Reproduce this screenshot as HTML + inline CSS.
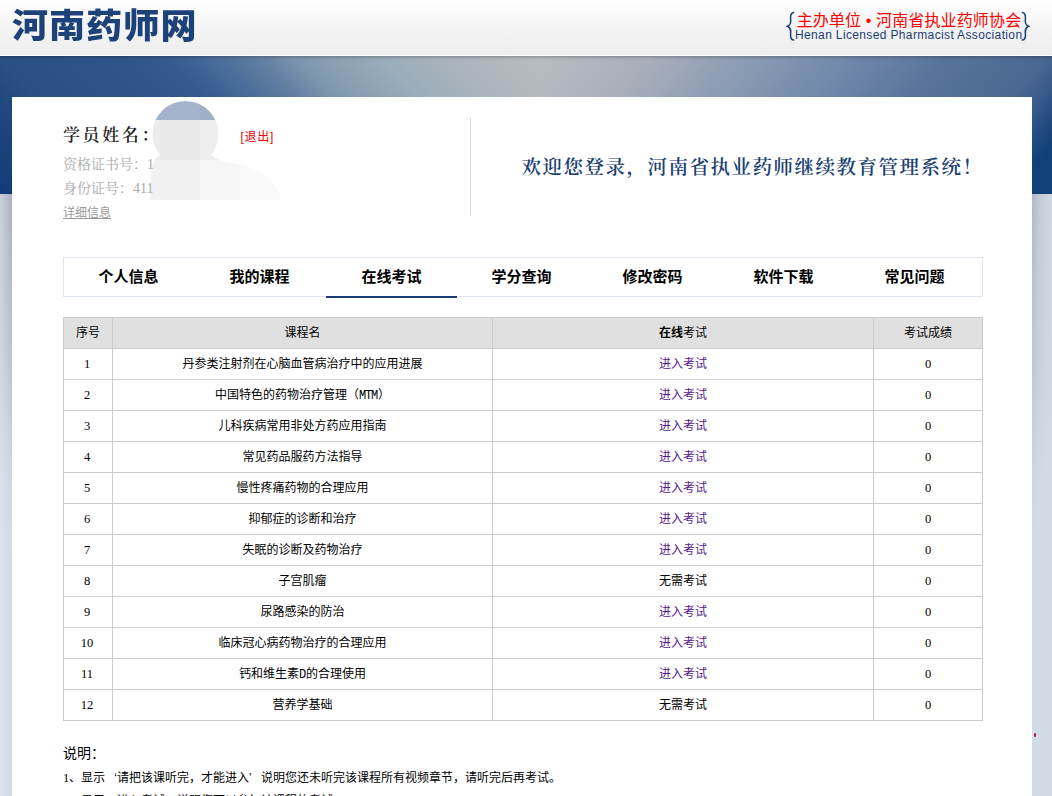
<!DOCTYPE html>
<html lang="zh-CN">
<head>
<meta charset="utf-8">
<title>河南药师网</title>
<style>
*{box-sizing:border-box;margin:0;padding:0}
html,body{width:1052px;height:796px;overflow:hidden}
body{position:relative;font-family:"Liberation Sans","Noto Sans CJK SC",sans-serif;font-size:12px;color:#000;
 background:linear-gradient(to bottom,#b9c0cb 194px,#cfd8e3 420px,#d8e3ee 796px)}
a{text-decoration:none}
#hdr{position:absolute;left:0;top:0;width:1052px;height:56px;background:linear-gradient(to bottom,#ffffff 0,#f4f4f4 50%,#eeeeee 100%);border-bottom:1px solid #fff}
#logo{position:absolute;left:12.2px;top:3px;transform:scaleX(1.062);transform-origin:0 0;font-family:"Liberation Sans","Noto Sans CJK SC",sans-serif;font-weight:900;font-size:34px;line-height:46px;letter-spacing:0.95px;color:#1d4179;white-space:nowrap}
#org{position:absolute;left:780px;top:0;width:272px;height:55px}
#org .cn{position:absolute;left:16.7px;top:10.5px;font-size:16px;line-height:20px;color:#f00;white-space:nowrap;letter-spacing:0.13px}
#org .en{position:absolute;left:15px;top:28.3px;font-size:12px;line-height:15px;color:#1d3d73;white-space:nowrap;letter-spacing:0.36px}
#band{position:absolute;left:0;top:56px;width:1052px;height:138px;background:#123f78;overflow:hidden}
#band i{position:absolute;top:0;height:138px;display:block}
#band .l{left:0;width:540px;background:linear-gradient(45deg,#123a75 0,#21497f 14%,#2b5083 20%,#2d5285 27%,#30558a 38%,#375b8d 45%,#45689a 50%,#5f7da0 57.5%,#7d95ae 63.6%,#8ea2b4 70%,#9aacba 76.1%,#aab5bd 86.7%,#b2b9bf 94%,#b7bdc1 100%)}
#band .r{left:540px;width:512px;background:linear-gradient(310deg,#123f78 0,#123f78 6.5%,#214a7f 10%,#345688 13.5%,#4a6791 19%,#58749c 35%,#7289aa 51%,#8c9cb4 67%,#a9b0bb 83%,#b2b8be 94%,#b7bdc1 100%)}
#band .s{left:0;width:1052px;height:4px;background:linear-gradient(to bottom,rgba(0,0,0,.22) 0,rgba(0,0,0,.1) 40%,rgba(0,0,0,0) 100%)}
#ls,#rs{position:absolute;top:194px;height:602px}
#ls{left:0;width:12px;background:linear-gradient(to bottom,rgba(222,232,244,0) 0,rgba(222,232,244,.3) 26%,rgba(222,232,244,.66) 46%,rgba(222,232,244,.78) 60%),linear-gradient(to right,#cbd1db,#a9b0bc)}
#rs{left:1032px;width:20px;background:linear-gradient(to bottom,rgba(210,220,231,0) 0,rgba(210,220,231,.35) 26%,rgba(210,220,231,.85) 48%,#d2dce7 62%),linear-gradient(to right,#b0b8c4,#c4ccd6 40%,#d0d8e1)}
#dot{position:absolute;left:1034px;top:733px;width:2px;height:4px;border-radius:1px;background:#a8283a}
#panel{position:absolute;left:12px;top:97px;width:1020px;height:700px;background:#fff}
.abs{position:absolute;white-space:nowrap}
.serif{font-family:"Liberation Serif","Noto Serif CJK SC",serif}
#nav{position:absolute;left:63px;top:257px;width:920px;height:40px;border:1px solid #dce5f0;background:#fff}
#nav a{position:absolute;top:0;width:131px;height:38px;line-height:37px;text-align:center;font-weight:bold;font-size:15px;color:#000}
#nav a.on{border-bottom:2px solid #193d72;height:40px;box-shadow:-1px 0 0 #fff,1px 0 0 #fff}
table{position:absolute;left:63px;top:317px;width:919px;border-collapse:collapse;table-layout:fixed}
td,th{border:1px solid #ccc;height:31px;text-align:center;font-size:12px;font-weight:normal;padding:0;vertical-align:middle}
th{background:#e0e0e0;padding-bottom:3px}
td.c{padding-bottom:3px}
td a{color:#551a8b}
.m{font-family:"Liberation Mono",monospace;font-size:12px;letter-spacing:-1.2px;margin-right:1.2px}
td:first-child{padding-right:2px}
td:first-child,td:last-child,.n1{font-family:"Liberation Serif","Noto Sans CJK SC",serif;font-size:12.5px}
.ql,.qr,.n1{display:inline-block;width:12px}
.ql{text-align:right}
.qr{text-align:left}
.n1{width:6px;text-align:center}
</style>
</head>
<body>
<div id="hdr">
 <div id="logo">河南药师网</div>
 <div id="org">
  <svg width="272" height="55" viewBox="0 0 272 55" style="position:absolute;left:0;top:0">
   <g fill="none" stroke="#1d3d73" stroke-width="1.5" stroke-linecap="round">
    <path d="M13.6 12.4 C10.8 13 10.3 15.2 10.6 18.5 C10.9 22 11 24.8 7.4 26.2 C11 27.6 10.9 30.5 10.6 34 C10.3 37.3 10.8 39.5 13.6 40.1"/>
    <path d="M242.4 12.4 C245.2 13 245.7 15.2 245.4 18.5 C245.1 22 245 24.8 248.6 26.2 C245 27.6 245.1 30.5 245.4 34 C245.7 37.3 245.2 39.5 242.4 40.1"/>
   </g>
  </svg>
  <div class="cn">主办单位 • 河南省执业药师协会</div>
  <div class="en">Henan Licensed Pharmacist Association</div>
 </div>
</div>
<div id="band"><i class="l"></i><i class="r"></i><i class="s"></i></div>
<div id="ls"></div><div id="rs"></div><div id="dot"></div>
<div id="panel"></div>

<div class="abs serif" style="left:63px;top:123px;font-size:17px;font-weight:600;line-height:26px;letter-spacing:2.6px;color:#222">学员姓名：</div>
<svg class="abs" style="left:140px;top:97px" width="150" height="108" viewBox="140 97 150 108">
 <defs>
  <clipPath id="sil"><circle cx="185.5" cy="134" r="33"/><path d="M150 200 L151 176 C151 166 153 160 160 155 L212 155 C216 160 222 161.5 232 163 C256 167 276 178 281 200 Z"/></clipPath>
  <filter id="bl" x="-5%" y="-5%" width="110%" height="110%"><feGaussianBlur stdDeviation="0.7"/></filter>
 </defs>
 <g clip-path="url(#sil)" filter="url(#bl)">
  <rect x="140" y="97" width="60" height="108" fill="#f1f1f1"/>
  <rect x="200" y="97" width="40" height="108" fill="#f6f6f6"/>
  <rect x="240" y="97" width="50" height="108" fill="#fafafa"/>
  <rect x="140" y="120" width="20" height="40" fill="#ececec"/>
  <rect x="160" y="120" width="40" height="40" fill="#e9e9e9"/>
  <rect x="200" y="120" width="25" height="40" fill="#eeeeee"/>
  <rect x="140" y="97" width="60" height="23" fill="#a4b3c9"/>
  <rect x="200" y="97" width="25" height="23" fill="#a0b0c7"/>
 </g>
</svg>
<a class="abs" style="left:240.5px;top:129.5px;font-size:12px;line-height:14px;letter-spacing:0.7px;color:#e00" href="#">[退出]</a>
<div class="abs serif" style="left:63px;top:155px;font-size:14px;line-height:20px;color:#aaa">资格证书号：1</div>
<div class="abs serif" style="left:63px;top:179px;font-size:14px;line-height:20px;color:#aaa">身份证号：411</div>
<a class="abs" style="left:63px;top:205px;font-size:12px;line-height:16px;color:#999;text-decoration:underline" href="#">详细信息</a>
<div class="abs" style="left:470px;top:117px;width:1px;height:99px;background:#ddd"></div>
<div class="abs serif" style="left:521.5px;top:154px;font-size:19.5px;font-weight:600;line-height:28px;letter-spacing:1.5px;color:#1c3f73">欢迎您登录，河南省执业药师继续教育管理系统！</div>

<div id="nav">
 <a style="left:-1px" href="#">个人信息</a>
 <a style="left:130px" href="#">我的课程</a>
 <a class="on" style="left:262px" href="#">在线考试</a>
 <a style="left:392px" href="#">学分查询</a>
 <a style="left:523px" href="#">修改密码</a>
 <a style="left:654px" href="#">软件下载</a>
 <a style="left:785px" href="#">常见问题</a>
</div>

<table>
 <colgroup><col style="width:49px"><col style="width:380px"><col style="width:381px"><col style="width:109px"></colgroup>
 <tr><th>序号</th><th>课程名</th><th><b>在线</b>考试</th><th>考试成绩</th></tr>
 <tr><td>1</td><td class="c">丹参类注射剂在心脑血管病治疗中的应用进展</td><td class="c"><a href="#">进入考试</a></td><td>0</td></tr>
 <tr><td>2</td><td class="c">中国特色的药物治疗管理（<span class="m">MTM</span>）</td><td class="c"><a href="#">进入考试</a></td><td>0</td></tr>
 <tr><td>3</td><td class="c">儿科疾病常用非处方药应用指南</td><td class="c"><a href="#">进入考试</a></td><td>0</td></tr>
 <tr><td>4</td><td class="c">常见药品服药方法指导</td><td class="c"><a href="#">进入考试</a></td><td>0</td></tr>
 <tr><td>5</td><td class="c">慢性疼痛药物的合理应用</td><td class="c"><a href="#">进入考试</a></td><td>0</td></tr>
 <tr><td>6</td><td class="c">抑郁症的诊断和治疗</td><td class="c"><a href="#">进入考试</a></td><td>0</td></tr>
 <tr><td>7</td><td class="c">失眠的诊断及药物治疗</td><td class="c"><a href="#">进入考试</a></td><td>0</td></tr>
 <tr><td>8</td><td class="c">子宫肌瘤</td><td class="c">无需考试</td><td>0</td></tr>
 <tr><td>9</td><td class="c">尿路感染的防治</td><td class="c"><a href="#">进入考试</a></td><td>0</td></tr>
 <tr><td>10</td><td class="c">临床冠心病药物治疗的合理应用</td><td class="c"><a href="#">进入考试</a></td><td>0</td></tr>
 <tr><td>11</td><td class="c">钙和维生素<span class="m">D</span>的合理使用</td><td class="c"><a href="#">进入考试</a></td><td>0</td></tr>
 <tr><td>12</td><td class="c">营养学基础</td><td class="c">无需考试</td><td>0</td></tr>
</table>

<div class="abs" style="left:63px;top:744px;font-size:14px;line-height:18px">说明：</div>
<div class="abs" style="left:63px;top:769px;font-size:12px;line-height:18px"><span class="n1">1</span>、显示<span class="ql">‘</span>请把该课听完，才能进入<span class="qr">’</span>说明您还未听完该课程所有视频章节，请听完后再考试。</div>
<div class="abs" style="left:63px;top:792px;font-size:12px;line-height:18px"><span class="n1">2</span>、显示<span class="ql">‘</span>进入考试<span class="qr">’</span>说明您可以参加该课程的考试。</div>
</body>
</html>
